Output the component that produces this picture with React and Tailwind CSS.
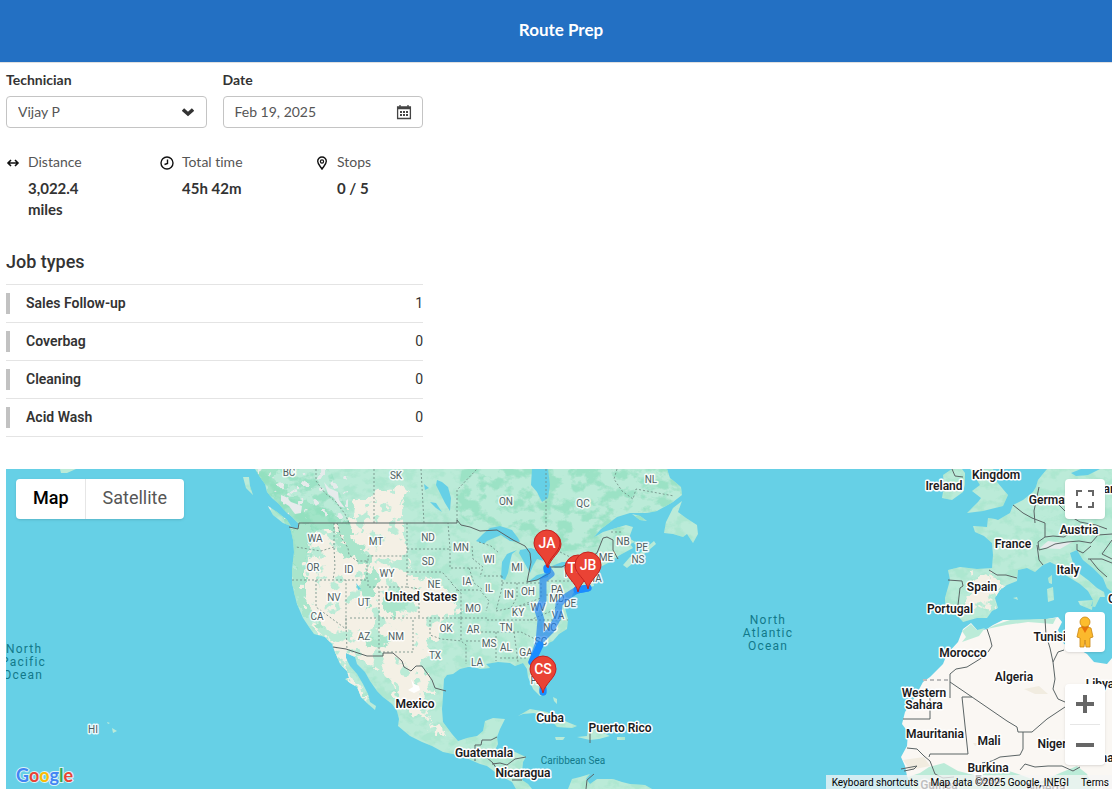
import { useState } from 'react';

const jobTypes = [
  { name: 'Sales Follow-up', count: 1 },
  { name: 'Coverbag', count: 0 },
  { name: 'Cleaning', count: 0 },
  { name: 'Acid Wash', count: 0 },
];

// [label, x, y] on the map canvas
const regions = [
  ['BC', 289, 472], ['SK', 396, 475], ['NL', 651, 479], ['ON', 506, 501], ['QC', 583, 503],
  ['WA', 315, 538], ['OR', 313, 567], ['CA', 317, 616], ['NV', 334, 597], ['ID', 349, 569],
  ['MT', 376, 541], ['WY', 387, 573], ['UT', 364, 602], ['AZ', 364, 636], ['NM', 396, 636],
  ['ND', 428, 537], ['SD', 428, 561], ['NE', 434, 584], ['MN', 461, 547], ['IA', 467, 581],
  ['OK', 446, 628], ['TX', 435, 655], ['MO', 473, 608], ['AR', 473, 629], ['LA', 477, 662],
  ['MS', 489, 643], ['AL', 506, 647], ['GA', 526, 652], ['FL', 536, 680], ['TN', 506, 627],
  ['KY', 518, 612], ['PA', 557, 589], ['MD', 557, 598], ['DE', 570, 603], ['OH', 528, 591],
  ['IN', 509, 594], ['IL', 489, 588], ['WI', 489, 559], ['MI', 517, 567], ['NY', 571, 573],
  ['ME', 606, 557], ['MA', 594, 578], ['NB', 623, 541], ['PE', 642, 547], ['NS', 638, 559],
  ['WV', 538, 607], ['VA', 558, 615], ['NC', 550, 627], ['SC', 541, 641], ['HI', 93, 729],
];

const countries = [
  ['United States', 421, 597], ['Mexico', 415, 704], ['Cuba', 550, 718], ['Puerto Rico', 620, 728],
  ['Guatemala', 484, 753], ['Nicaragua', 523, 773], ['Ireland', 944, 486], ['Kingdom', 996, 475],
  ['Germany', 1053, 500], ['France', 1013, 544], ['Austria', 1079, 530], ['Italy', 1068, 570],
  ['Spain', 982, 587], ['Portugal', 950, 609], ['Morocco', 963, 653], ['Algeria', 1014, 677],
  ['Tunisia', 1053, 637], ['Western', 924, 693], ['Sahara', 924, 705], ['Mauritania', 935, 734],
  ['Mali', 989, 741], ['Niger', 1052, 744], ['Burkina', 988, 768], ['Faso', 988, 780],
  ['Libya', 1100, 684], ['Guinea', 939, 785], ['Nigeria', 1046, 788], ['Greece', 1127, 599],
  ['ar', 1109, 489], ['na', 1107, 758],
];

const americas =
  'M255 469L260 477L265 484L267 492L272 498L279 504L286 512L292 517L298 523L298 529L290 527L293 540L294 552L292 570L292 583L294 592L297 604L303 618L309 627L314 634L325 637L332 644L335 652L340 664L347 671L349 678L345 679L350 683L357 687L361 697L368 704L375 710L376 706L370 702L368 694L363 684L357 674L350 666L346 658L346 653L355 657L357 664L365 672L370 681L377 691L383 697L392 704L397 711L399 719L398 726L410 736L422 742L432 746L443 752L453 754L462 756L473 761L480 764L487 766L495 772L503 777L512 782L516 789L532 789L528 784L522 780L522 772L523 762L526 757L515 752L503 753L495 750L498 744L497 737L500 729L505 719L493 718L485 721L483 731L477 736L467 738L458 741L452 734L443 722L442 709L443 696L444 679L447 675L453 674L460 669L468 667L474 667L480 669L490 668L486 664L498 662L510 663L515 666L523 663L527 669L528 677L533 689L540 696L545 694L546 689L540 676L534 664L535 657L542 646L553 641L559 634L567 629L568 619L565 608L570 602L573 593L577 590L585 588L594 586L592 577L598 568L610 562L620 555L633 548L630 544L635 542L629 538L633 527L626 525L603 532L593 538L601 529L617 517L630 513L647 513L657 511L673 502L682 495L681 487L670 478L667 469Z';

const europe =
  'M1047 469L1042 475L1038 480L1036 487L1033 492L1023 500L1013 505L1010 513L998 520L995 519L988 518L987 527L973 526L975 532L984 536L992 543L993 555L992 568L977 569L960 567L948 570L950 580L945 598L946 614L957 615L963 622L977 618L987 618L992 611L998 608L995 598L1000 590L1007 585L1017 581L1018 570L1027 568L1035 572L1043 565L1050 562L1060 567L1067 576L1080 584L1088 591L1093 600L1091 606L1095 607L1100 597L1105 597L1104 592L1097 588L1088 580L1080 574L1073 563L1070 553L1077 550L1083 560L1093 568L1103 578L1107 588L1112 592V469Z';

const africa =
  'M963 629L971 623L978 631L987 629L993 625L1003 620L1018 620L1030 620L1047 619L1058 617L1062 622L1058 630L1064 644L1075 647L1087 654L1094 662L1107 664L1112 658V789H913L907 776L905 766L901 757L907 746L908 732L902 724L905 712L915 697L923 682L930 677L943 664L947 654L958 642Z';

const islands =
  'M243 477L249 477L250 486L253 495L246 488ZM268 506L277 512L287 520L291 526L283 523L273 515ZM664 533L666 522L673 508L682 501L678 512L686 518L697 525L698 534L693 543L687 534L683 537L673 534ZM623 565L630 557L640 553L654 541L656 544L643 555L627 568ZM632 514L640 516L647 521L640 520ZM635 541L642 546L634 544ZM518 716L530 709L547 712L560 719L577 726L572 728L557 727L551 720L534 713L523 714ZM577 737L587 736L588 729L597 730L610 736L599 739L590 740ZM555 737H565L563 740H556ZM617 737H625V740H617ZM553 697L557 699L557 704L554 701ZM942 498L944 486L943 475L952 469H962L965 473L965 484L963 492L952 500ZM970 469H993L997 482L1008 495L1003 506L983 511L967 513L978 502L981 498L972 491L980 485ZM1078 601L1093 600L1092 610L1080 605ZM1047 589L1053 587L1054 600L1048 602ZM1048 578L1052 575L1052 584L1049 583ZM1013 598L1017 597L1018 600ZM112 728L117 731L113 733ZM107 722L110 723L108 724ZM60 469H76L67 473H61ZM570 784L572 779L580 777L590 774L586 779L590 784L597 779L613 779L622 782L630 784L645 785L652 789H568Z';

const lakes =
  'M532 469L531 485L537 492L542 502L548 498L550 485L548 469ZM476 541L483 534L490 528L500 526L512 530L518 538L520 542L510 541L501 535L487 541L484 544ZM502 562L507 554L517 550L512 554L510 562L508 573L505 580L501 578ZM520 550L531 548L542 552L544 561L537 559L533 566L530 573L524 562L519 553ZM528 582L537 575L549 572L548 577L537 580ZM552 566L562 562L570 562L567 567L555 568ZM437 480L442 482L448 487L451 498L450 511L445 503L440 493L436 485ZM430 502L436 503L442 512L436 508ZM424 484L429 488L425 490ZM356 583L361 589L358 590ZM1071 473L1081 469H1100L1088 475L1076 476Z';

const dry =
  'M352 508L356 499L374 499L377 489L391 492L397 487L409 491L401 503L404 523L405 550L410 563L405 575L419 577L433 582L447 589L455 600L457 610L448 616L444 632L430 640L426 657L417 667L430 680L434 692L423 692L425 703L426 717L430 722L423 719L411 711L399 704L393 683L384 673L370 663L356 658L347 653L341 662L347 671L359 687L370 705L362 697L345 679L335 653L326 638L312 626L308 610L302 589L308 558L313 532L337 526L344 548L356 553L351 523Z';

const arid =
  'M972 578L990 574L996 581L1005 584L993 597L997 605L986 612L977 607L968 615L965 602L971 591ZM312 541L332 532L333 547L318 552ZM309 556L334 549L333 590L327 606L317 596L308 593ZM428 723L444 730L440 735L430 729Z';

// green belts that run through the dry west
const ranges =
  'M296 523H312L314 533L308 544L306 560L302 580L304 600L312 612L325 628L318 626L306 615L296 600L292 580L294 550ZM336 523L352 526L354 540L364 549L372 560L366 566L354 560L346 556L336 548L341 538ZM362 575L374 566L380 580L372 592L368 612L360 598ZM382 600L398 590L412 596L406 608L396 618L384 612ZM355 630L368 640L385 636L390 644L372 648Z';

const stateLines =
  'M316 469V481L325 493L336 502L345 514L349 523M374 469V523M421 469L424 523M457 520V490L477 469M334 523V547L321 551L296 547M337 523L341 537L348 548L349 555L357 561H368V556H407M334 548L335 567L333 580M292 580H367V559M316 580V607L346 629V580M368 580V587H407M407 523V587L419 589V599M407 549H450L448 523M407 572H442L452 583M379 587V653M379 652H413V620M350 618H461M346 618V625L347 650M419 591V617M450 549V568H480M452 584L461 593V618M430 620V635L441 639L462 641M461 618H487M466 641H484M461 618V641L466 645V664M456 590H480L489 601L486 611M469 568L474 583L483 590M472 546L473 559L483 567L480 577M479 542L491 546L499 553M484 576H502M502 576V588L496 611M517 583V597L511 608M502 583H541M541 583V598L530 602L513 608M496 611L511 608L530 604M487 620H568M481 632H521M496 632V661M514 632L518 662M500 658H528M521 632L533 638L543 646M530 620L554 610L560 600M547 581H573M570 563L574 583M546 469V553M546 595H562M617 469L614 479L622 491L633 499L636 489L674 496M611 532H622M560 552L572 558';

const borderLines =
  'M289 527L298 529L299 523H457L457 520L461 525L470 527L480 531L497 530L513 540L525 546L530 553L531 562L527 582L537 580L550 573V567H562L570 562L584 561L597 553L603 538L607 537L613 540L613 550L618 559M333 647L346 649L367 656H383V653H393L402 661L404 667L411 671L416 666H422L432 680L435 688L446 691M475 761V745H481L482 740H491L497 737M492 764L500 763L507 765L515 759L526 757M485 756L493 763L498 771M512 780H522M586 789L587 780L594 774M590 731V743M1013 505L1023 513L1032 518L1045 523V537L1053 536M1035 523L1034 511L1039 487M1045 537L1038 542L1039 550L1047 548L1055 544L1067 542L1079 541L1091 543L1098 535L1112 534M1037 545L1039 560L1043 565M1053 536L1064 537L1075 530M989 570L997 575L1006 575L1017 578M948 580L962 581L963 586L960 588L958 605M1077 544V550L1083 553L1091 546M1088 559L1102 559L1112 563M1090 559L1098 569L1107 577M1112 540L1102 554L1112 559M952 469L955 476L963 477M1058 504L1070 516L1080 522L1096 525L1107 529M987 629L990 638L992 646L988 652L980 659L967 667L956 669L950 674V698M930 698V719H903M950 682L972 697L1007 721L1017 727L1018 732L1032 732L1047 719L1065 707M972 697H962L968 754H930L929 757M1023 732V749L1020 755L1000 757L992 761L982 763M1045 619L1046 635L1050 648L1053 662L1055 679L1053 689L1058 699L1065 702M907 748L917 749L924 756L930 761L935 774L943 778L954 777M901 769L917 766L914 769L904 771M1020 770L1025 764L1035 767L1048 766L1062 766L1073 771L1080 767M1053 662L1058 652L1064 650';

function Pin({ x, y, label }) {
  return (
    <g>
      <path
        d={`M${x} ${y + 24}C${x - 2} ${y + 14} ${x - 13} ${y + 9} ${x - 13} ${y}A13 13 0 1 1 ${x + 13} ${y}C${x + 13} ${y + 9} ${x + 2} ${y + 14} ${x} ${y + 24}Z`}
        fill="#ea4335"
        stroke="#c5221f"
      />
      <text x={x} y={y + 5} textAnchor="middle" fill="#fff" className="text-[14px] font-medium">{label}</text>
    </g>
  );
}

function RouteMap() {
  return (
    <svg
      className="block h-full w-full font-['Roboto',sans-serif]"
      viewBox="6 469 1106 320"
      preserveAspectRatio="xMidYMid slice"
      role="img"
      aria-label="Route map"
    >
      <defs>
        <clipPath id="land"><path d={americas + europe + islands} /></clipPath>
        <clipPath id="dry"><path d={dry + arid} /></clipPath>
        <clipPath id="north">
          <path d="M250 469H330L352 523V560H340L325 525L308 545L303 585H290L285 520L250 490ZM462 469H700V500L620 535L600 546L560 552L520 530L490 525L470 525L455 510Z" />
        </clipPath>
        <filter id="forest" x="0" y="0" width="1" height="1" colorInterpolationFilters="sRGB">
          <feTurbulence type="fractalNoise" baseFrequency="0.07 0.09" numOctaves="4" seed="8" />
          <feColorMatrix values="0 0 0 0 0.59  0 0 0 0 0.88  0 0 0 0 0.76  6 0 0 0 -2.8" />
        </filter>
        <filter id="scrub" x="0" y="0" width="1" height="1" colorInterpolationFilters="sRGB">
          <feTurbulence type="fractalNoise" baseFrequency="0.07" numOctaves="4" seed="21" />
          <feColorMatrix values="0 0 0 0 0.73  0 0 0 0 0.92  0 0 0 0 0.84  20 0 0 0 -11.800" />
        </filter>
        <filter id="snow" x="0" y="0" width="1" height="1" colorInterpolationFilters="sRGB">
          <feTurbulence type="fractalNoise" baseFrequency="0.11" numOctaves="3" seed="5" />
          <feColorMatrix values="0 0 0 0 0.9  0 0 0 0 0.92  0 0 0 0 0.92  24 0 0 0 -15.500" />
        </filter>
        <filter id="rough">
          <feTurbulence type="fractalNoise" baseFrequency="0.12" numOctaves="3" seed="3" />
          <feDisplacementMap in="SourceGraphic" scale="18" xChannelSelector="R" yChannelSelector="G" />
        </filter>
      </defs>

      <rect x="6" y="469" width="1106" height="320" fill="#66d0e6" />
      <path d={americas + europe + islands} fill="#bbebd8" />
      <g clipPath="url(#land)">
        <rect x="240" y="469" width="872" height="320" filter="url(#forest)" opacity="0.35" />
        <g clipPath="url(#north)">
          <rect x="240" y="469" width="470" height="120" filter="url(#forest)" opacity="0.75" />
        </g>
        <path d="M255 469H272L290 495L318 505L349 524L352 552L345 556L332 530L314 526L309 545L303 558L306 583L293 583L290 527L270 495Z" fill="#8ddebb" opacity="0.55" filter="url(#rough)" />
        <path d={dry + arid} fill="#f4f0e5" filter="url(#rough)" />
        <g clipPath="url(#dry)">
          <rect x="300" y="485" width="170" height="245" filter="url(#scrub)" />
          <rect x="960" y="570" width="60" height="50" filter="url(#scrub)" />
        </g>
        <path d={ranges} fill="#a9e5cb" filter="url(#rough)" />
        <path d="M281 495L286 497L291 502L302 506L301 513L295 514L289 506L281 501ZM324 482L329 488L338 492L339 500L345 508L339 506L334 498L328 494ZM1040 548L1048 541L1063 543L1074 541L1060 549Z" fill="#e6ebec" />
        <rect x="258" y="469" width="90" height="50" filter="url(#snow)" />
        <path d="M411 679L414 684L419 686L420 690L414 693L408 690L413 687Z" fill="#fff" />
      </g>
      <path d={africa} fill="#faf7f3" />
      <path d="M962 631L971 624L977 630L985 628L979 636L962 642L966 637ZM987 629L995 625L1010 620L1045 619L1056 618L1053 624L1028 622L1006 625ZM929 767L944 763L958 771L978 776L1000 768L1018 774L1040 782L1060 773L1077 766L1087 774L1095 789H914L908 777L920 773Z" fill="#bbebd8" />
      <path d="M903 760L924 757L930 766L910 770ZM1024 689L1039 686L1048 694L1035 694ZM973 743H981L975 746Z" fill="#f1ece0" />
      <path d={lakes} fill="#66d0e6" />
      <path d={stateLines} fill="none" stroke="#6f8a82" strokeWidth="1" strokeDasharray="2 2" opacity="0.8" />
      <path d={borderLines} fill="none" stroke="#5b6465" strokeWidth="1" />
      <path d="M923 680H950" stroke="#bbb" strokeWidth="2" strokeDasharray="4 3" />

      <g textAnchor="middle" fill="#4f5f63" stroke="#fff" strokeWidth="3" strokeOpacity="0.85" strokeLinejoin="round" paintOrder="stroke" className="text-[10px]">
        {regions.map(([label, x, y]) => (
          <text key={label} x={x} y={y + 4}>{label}</text>
        ))}
      </g>

      <g fill="none" stroke="#1a80f0" strokeWidth="7" strokeLinejoin="round" strokeLinecap="round" opacity="0.65">
        <path d="M547 568L551 574L543 580L543 600L538 610L541 620L539 642L532 662" />
        <path d="M588 588L577 590L566 597L559 604L558 617L551 630L540 641L533 660M543 688V692" />
      </g>
      <path d="M577 590L588 588M547 568V570M540 645L532 662M543 690V692" fill="none" stroke="#1a8cff" strokeWidth="7" strokeLinecap="round" />

      <g textAnchor="middle" fill="#1b1b1d" stroke="#fff" strokeWidth="3" strokeLinejoin="round" paintOrder="stroke" className="text-[12px] font-semibold">
        {countries.map(([label, x, y]) => (
          <text key={label} x={x} y={y + 4}>{label}</text>
        ))}
      </g>
      <g fill="#12798a" className="text-[12px] tracking-widest">
        <text x="6" y="653">North</text>
        <text x="1" y="666">Pacific</text>
        <text x="3" y="679">Ocean</text>
        <g textAnchor="middle">
          <text x="768" y="624">North</text>
          <text x="768" y="637">Atlantic</text>
          <text x="768" y="650">Ocean</text>
        </g>
      </g>
      <text x="573" y="764" textAnchor="middle" fill="#12798a" className="text-[10px]">Caribbean Sea</text>

      <Pin x={548} y={544} label="" />
      <Pin x={547} y={543} label="JA" />
      <Pin x={578} y={568} label="TM" />
      <Pin x={588} y={565} label="JB" />
      <Pin x={543} y={669} label="CS" />
    </svg>
  );
}

function Pegman() {
  return (
    <svg width="18" height="32" viewBox="0 0 18 32" aria-hidden="true">
      <path d="M3 12Q9 9 15 12L17 21L14 22V31H10L9 24L8 31H4V22L1 21Z" fill="#fbb92d" stroke="#c98512" strokeWidth="0.8" />
      <path d="M5 10H13L9 17Z" fill="#e8710a" />
      <circle cx="9" cy="6" r="5" fill="#fdbd2e" stroke="#c98512" strokeWidth="0.8" />
    </svg>
  );
}

const stats = [
  {
    label: 'Distance',
    value: '3,022.4 miles',
    icon: <path d="M2 7H12M5 4L2 7L5 10M9 4L12 7L9 10" strokeWidth="1.6" />,
  },
  {
    label: 'Total time',
    value: '45h 42m',
    icon: (
      <>
        <circle cx="7" cy="7" r="6" strokeWidth="1.4" />
        <path d="M7.500 3.500V7.500L4.500 8.500" strokeWidth="1.4" />
      </>
    ),
  },
  {
    label: 'Stops',
    value: '0 / 5',
    icon: (
      <>
        <path d="M7 13C5 10 2.700 8 2.700 5.300A4.300 4.300 0 0 1 11.300 5.300C11.300 8 9 10 7 13Z" strokeWidth="1.4" />
        <circle cx="7" cy="5.500" r="1.600" strokeWidth="1.2" />
      </>
    ),
  },
];

export default function App() {
  const [technician, setTechnician] = useState('Vijay P');
  const [date, setDate] = useState('Feb 19, 2025');
  const [mapType, setMapType] = useState('Map');

  return (
    <div className="bg-white font-['Lato',sans-serif] text-[#333] [font-variant-ligatures:none]">
      <header className="flex h-[62px] items-center justify-center bg-[#2370c3] pb-0.5">
        <h1 className="pl-2.5 text-[17px] font-bold text-white">Route Prep</h1>
      </header>

      <main className="border-t border-[#e0e0e0] pl-1.5 pb-1">
        <div className="max-w-[417px]">
          <div className="grid grid-cols-2 gap-4 pt-[7px]">
            <div>
              <label htmlFor="technician" className="block h-[26px] text-[14px] leading-5 font-bold">Technician</label>
              <div className="relative">
                <select
                  id="technician"
                  value={technician}
                  onChange={(e) => setTechnician(e.target.value)}
                  className="block h-8 w-full appearance-none rounded border border-[#c4c4c4] bg-white pr-8 pb-0.5 pl-[11px] text-[14px] text-[#555]"
                >
                  <option>Vijay P</option>
                </select>
                <svg className="pointer-events-none absolute top-2.5 right-[13px] h-3 w-3" viewBox="0 0 12 12" aria-hidden="true">
                  <path d="M1 3.500L6 8L11 3.500" fill="none" stroke="#333" strokeWidth="3.400" />
                </svg>
              </div>
            </div>
            <div>
              <label htmlFor="date" className="block h-[26px] text-[14px] leading-5 font-bold">Date</label>
              <div className="relative">
                <input
                  id="date"
                  type="text"
                  value={date}
                  onChange={(e) => setDate(e.target.value)}
                  className="block h-8 w-full rounded border border-[#c4c4c4] bg-white pr-8 pb-0.5 pl-[11px] text-[14px] text-[#555]"
                />
                <svg className="pointer-events-none absolute top-2 right-[11px] h-4 w-4" viewBox="0 0 16 16" aria-hidden="true">
                  <path d="M1.600 3H14.400V14.500H1.600ZM2 4.500H14M4 1V4M12 1V4" fill="none" stroke="#444" strokeWidth="1.3" />
                  <path d="M4 8H12M4 11H12" stroke="#444" strokeWidth="1.8" strokeDasharray="2 1" />
                </svg>
              </div>
            </div>
          </div>

          <div className="grid grid-cols-[154px_155px_1fr] pt-6">
            {stats.map((stat) => (
              <div key={stat.label} className="flex gap-2">
                <svg className="mt-1 h-3.5 w-3.5 shrink-0" viewBox="0 0 14 14" fill="none" stroke="#111" aria-hidden="true">
                  {stat.icon}
                </svg>
                <div>
                  <p className="text-[14px] leading-5 text-[#555]">{stat.label}</p>
                  <p className="max-w-16 pt-1.5 text-[15px] leading-[21px] font-bold">{stat.value}</p>
                </div>
              </div>
            ))}
          </div>

          <section className="pt-7 font-['Roboto',sans-serif]">
            <h2 className="text-[18px] leading-7 font-medium">Job types</h2>
            <table className="mt-2 w-full border-collapse text-[14px]">
              <tbody>
                {jobTypes.map((job) => (
                  <tr key={job.name} className="h-[38px] border-y border-[#e4e4e4]">
                    <th scope="row" className="p-0 text-left font-semibold">
                      <div className="border-l-4 border-[#c2c2c2] pl-4 leading-[21px]">{job.name}</div>
                    </th>
                    <td className="p-0 text-right">{job.count}</td>
                  </tr>
                ))}
              </tbody>
            </table>
          </section>
        </div>

        <section className="relative mt-8 h-80 overflow-hidden font-['Roboto',sans-serif]">
          <RouteMap />

          <div className="absolute top-2.5 left-2.5 flex h-10 rounded-sm bg-white text-[18px] shadow">
            <button
              type="button"
              onClick={() => setMapType('Map')}
              className={`border-r border-[#e6e6e6] pr-4 pb-1 pl-[17px] ${mapType === 'Map' ? 'font-medium text-black' : 'text-[#565656]'}`}
            >
              Map
            </button>
            <button
              type="button"
              onClick={() => setMapType('Satellite')}
              className={`px-[17px] pb-1 ${mapType === 'Satellite' ? 'font-medium text-black' : 'text-[#565656]'}`}
            >
              Satellite
            </button>
          </div>

          <button type="button" aria-label="Toggle fullscreen" className="absolute top-2.5 right-[7px] flex h-10 w-10 items-center justify-center rounded-sm bg-white shadow">
            <svg width="18" height="18" viewBox="0 0 18 18" fill="none" stroke="#666" strokeWidth="2" aria-hidden="true">
              <path d="M1 6V1H6M12 1H17V6M17 12V17H12M6 17H1V12" />
            </svg>
          </button>

          <div className="absolute right-[7px] bottom-6 flex flex-col gap-8">
            <button type="button" aria-label="Street View" className="flex h-10 w-10 items-center justify-center rounded-sm bg-white shadow">
              <Pegman />
            </button>
            <div className="rounded-sm bg-white shadow">
              <button type="button" aria-label="Zoom in" className="flex h-10 w-10 items-center justify-center">
                <svg width="18" height="18" viewBox="0 0 18 18" stroke="#666" strokeWidth="4" aria-hidden="true">
                  <path d="M9 0V18M0 9H18" />
                </svg>
              </button>
              <div className="mx-[5px] h-px bg-[#e6e6e6]"></div>
              <button type="button" aria-label="Zoom out" className="flex h-10 w-10 items-center justify-center">
                <svg width="18" height="18" viewBox="0 0 18 18" stroke="#666" strokeWidth="4" aria-hidden="true">
                  <path d="M0 9H18" />
                </svg>
              </button>
            </div>
          </div>

          <a href="#google" aria-label="Google" className="absolute bottom-0.5 left-2.5 font-['Lato',sans-serif] text-[18px] leading-6 font-bold [paint-order:stroke] [-webkit-text-stroke:2px_#d8f2f7]">
            <span className="text-[#4285f4]">G</span>
            <span className="text-[#ea4335]">o</span>
            <span className="text-[#fbbc04]">o</span>
            <span className="text-[#4285f4]">g</span>
            <span className="text-[#34a853]">l</span>
            <span className="text-[#ea4335]">e</span>
          </a>

          <div className="absolute right-0 bottom-0 flex h-3.5 items-center gap-3 bg-[#f5f5f5]/75 pr-[3px] pl-1.5 text-[10px] text-black">
            <button type="button">Keyboard shortcuts</button>
            <span>Map data ©2025 Google, INEGI</span>
            <a href="#terms">Terms</a>
          </div>
        </section>
      </main>
    </div>
  );
}
